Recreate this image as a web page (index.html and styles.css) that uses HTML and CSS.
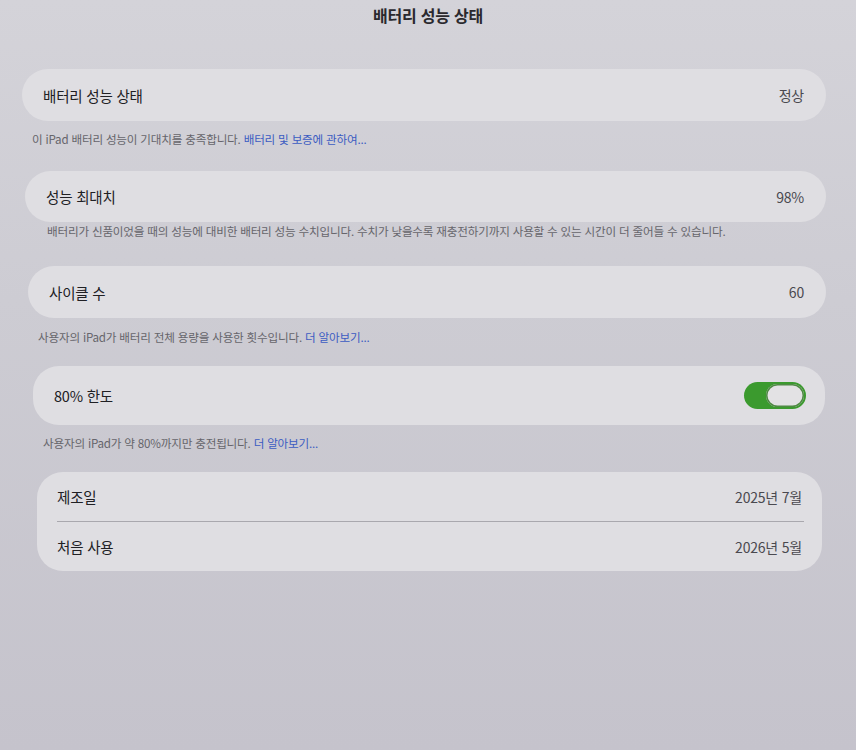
FILE: index.html
```html
<!DOCTYPE html>
<html lang="ko">
<head>
<meta charset="utf-8">
<title>배터리 성능 상태</title>
<link rel="stylesheet" href="styles.css">
</head>
<body>
<div class="screen">
  <h1 class="title">배터리 성능 상태</h1>

  <section class="group g1">
    <div class="card">
      <div class="row"><span class="label">배터리 성능 상태</span><span class="value">정상</span></div>
    </div>
    <p class="foot">이 iPad 배터리 성능이 기대치를 충족합니다. <span class="link">배터리 및 보증에 관하여...</span></p>
  </section>

  <section class="group g2">
    <div class="card">
      <div class="row"><span class="label">성능 최대치</span><span class="value">98%</span></div>
    </div>
    <p class="foot foot-wide">배터리가 신품이었을 때의 성능에 대비한 배터리 성능 수치입니다. 수치가 낮을수록 재충전하기까지 사용할 수 있는 시간이 더 줄어들 수 있습니다.</p>
  </section>

  <section class="group g3">
    <div class="card">
      <div class="row"><span class="label">사이클 수</span><span class="value">60</span></div>
    </div>
    <p class="foot foot-3">사용자의 iPad가 배터리 전체 용량을 사용한 횟수입니다. <span class="link">더 알아보기...</span></p>
  </section>

  <section class="group g4">
    <div class="card">
      <div class="row row-tall"><span class="label">80% 한도</span><span class="toggle"><span class="knob"></span></span></div>
    </div>
    <p class="foot">사용자의 iPad가 약 80%까지만 충전됩니다. <span class="link">더 알아보기...</span></p>
  </section>

  <section class="group g5">
    <div class="card">
      <div class="row row-split"><span class="label">제조일</span><span class="value">2025년 7월</span></div>
      <div class="divider"></div>
      <div class="row row-split"><span class="label">처음 사용</span><span class="value">2026년 5월</span></div>
    </div>
  </section>
</div>
</body>
</html>
```

FILE: styles.css
```css
* { box-sizing: border-box; }
html, body { margin: 0; padding: 0; }
body {
  width: 856px;
  height: 750px;
  overflow: hidden;
  font-family: "Noto Sans CJK KR", "Noto Sans", sans-serif;
  background: linear-gradient(180deg, #d4d3d9 0%, #cdccd3 40%, #c5c3cc 100%);
  color: #2b2a2f;
}
.screen {
  display: flex;
  flex-direction: column;
  padding-top: 3px;
}
.title {
  margin: 0;
  text-align: center;
  font-size: 16px;
  font-weight: 700;
  line-height: 24px;
  color: #2a292e;
  letter-spacing: -0.2px;
}
.group { display: flex; flex-direction: column; }
.g1 { margin: 42px 30px 0 22px; }
.g2 { margin: 23px 30px 0 25px; }
.g3 { margin: 26px 30px 0 28px; }
.g4 { margin: 20px 31px 0 33px; }
.g5 { margin: 20px 34px 0 37px; }

.card {
  background: #dfdee2;
  border-radius: 26px;
  display: flex;
  flex-direction: column;
}
.row {
  height: 52px;
  display: flex;
  align-items: center;
  justify-content: space-between;
  padding: 0 22px 0 21px;
}
.g2 .row { height: 51px; }
.row-tall { height: 59px; padding-right: 19px; }
.row-split { height: 49px; padding: 0 20px; }
.label {
  font-size: 14.5px;
  font-weight: 400;
  color: #202024;
  letter-spacing: -0.2px;
}
.value {
  font-size: 14px;
  color: #4a494f;
  letter-spacing: -0.2px;
}
.divider {
  height: 1px;
  background: #a9a8ae;
  margin: 0 18px 0 20px;
}
.foot {
  margin: 0;
  padding: 9px 10px 0;
  font-size: 11.6px;
  line-height: 18px;
  color: #66656b;
  letter-spacing: -0.2px;
}
.foot-wide { padding: 0 22px 0; }
.foot-3 { padding-top: 10px; }
.link { color: #3c5cc2; }

.toggle {
  width: 62px;
  height: 27px;
  border-radius: 14px;
  background: #3b9a2e;
  display: flex;
  justify-content: flex-end;
  align-items: center;
  padding: 2px;
}
.knob {
  width: 38px;
  height: 23px;
  border-radius: 12px;
  background: #e3e2e4;
  box-shadow: inset 0 0 0 1.5px #4f8a44;
}
```
